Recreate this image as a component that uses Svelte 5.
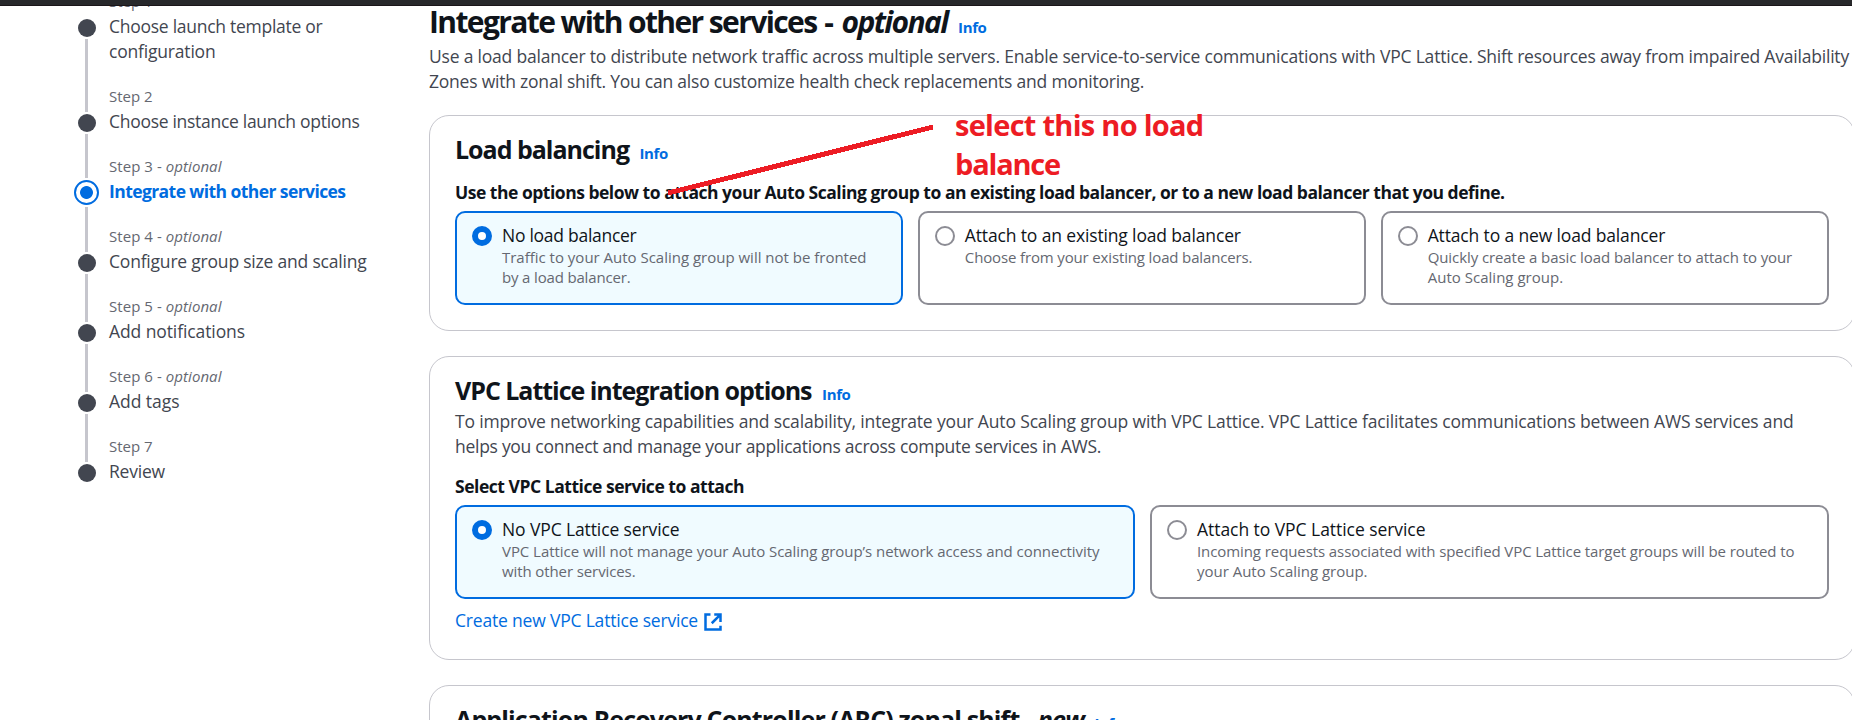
<script>
  const steps = [
    { n: 1, lines: [['Choose launch template or', 213.5], ['configuration', 106.5]] },
    { n: 2, lines: [['Choose instance launch options', 250.5]] },
    { n: 3, optional: true, active: true, lines: [['Integrate with other services', 236.5]] },
    { n: 4, optional: true, lines: [['Configure group size and scaling', 257.5]] },
    { n: 5, optional: true, lines: [['Add notifications', 136]] },
    { n: 6, optional: true, lines: [['Add tags', 70.5]] },
    { n: 7, lines: [['Review', 56]] },
  ];

  const balancers = [
    {
      title: ['No load balancer', 134.5],
      on: true,
      text: [['Traffic to your Auto Scaling group will not be fronted', 364.5], ['by a load balancer.', 128.5]],
    },
    {
      title: ['Attach to an existing load balancer', 276],
      text: [['Choose from your existing load balancers.', 287.5]],
    },
    {
      title: ['Attach to a new load balancer', 237.5],
      text: [['Quickly create a basic load balancer to attach to your', 364.5], ['Auto Scaling group.', 135.5]],
    },
  ];

  const lattice = [
    {
      title: ['No VPC Lattice service', 177.5],
      on: true,
      text: [
        ['VPC Lattice will not manage your Auto Scaling group’s network access and connectivity', 597.5],
        ['with other services.', 133.5],
      ],
    },
    {
      title: ['Attach to VPC Lattice service', 228.5],
      text: [
        ['Incoming requests associated with specified VPC Lattice target groups will be routed to', 597.5],
        ['your Auto Scaling group.', 170.5],
      ],
    },
  ];

  // Tracks a line of text so that it fills the given measure.
  function fit(node, width) {
    const spacing = (width - node.getBoundingClientRect().width) / node.textContent.length;
    node.style.letterSpacing = `${spacing.toFixed(3)}px`;
  }
</script>

{#snippet line(item)}
  <span class="line"><span class="fit" use:fit={item[1]}>{item[0]}</span></span>
{/snippet}

{#snippet tiles(items)}
  <div class="tiles" class:two={items.length === 2}>
    {#each items as t}
      <label class="tile" class:on={t.on}>
        <span class="radio"></span>
        <span class="tile-body">
          <span class="tile-title">{@render line(t.title)}</span>
          <span class="tile-text">{#each t.text as l}{@render line(l)}{/each}</span>
        </span>
      </label>
    {/each}
  </div>
{/snippet}

{#snippet info()}
  <a class="info" href="#info"><span class="fit" use:fit={28.5}>Info</span></a>
{/snippet}

<div class="page">
  <div class="topbar"></div>
  <div class="layout">
    <nav>
      <ol>
        {#each steps as s}
          <li class:active={s.active}>
            <div class="track">
              <i class="seg top"></i>
              <i class="dot"></i>
              <i class="seg rest"></i>
            </div>
            <div class="step">
              <div class="caption">
                {#if s.optional}
                  <span class="fit" use:fit={112.5}>Step {s.n} - <em>optional</em></span>
                {:else}
                  <span class="fit" use:fit={43.5}>Step {s.n}</span>
                {/if}
              </div>
              <div class="name">{#each s.lines as l}{@render line(l)}{/each}</div>
            </div>
          </li>
        {/each}
      </ol>
    </nav>

    <main>
      <h1>
        <span class="fit" use:fit={387.5}>Integrate with other services</span>
        <span class="dash">-</span>
        <em class="fit" use:fit={106}>optional</em>
        {@render info()}
      </h1>
      <p class="lead">
        {@render line(['Use a load balancer to distribute network traffic across multiple servers. Enable service-to-service communications with VPC Lattice. Shift resources away from impaired Availability', 1420])}
        {@render line(['Zones with zonal shift. You can also customize health check replacements and monitoring.', 715])}
      </p>

      <section class="card">
        <h2><span class="fit" use:fit={174}>Load balancing</span>{@render info()}</h2>
        <div class="label spaced">
          {@render line(['Use the options below to attach your Auto Scaling group to an existing load balancer, or to a new load balancer that you define.', 1049.5])}
        </div>
        {@render tiles(balancers)}
      </section>

      <section class="card">
        <h2><span class="fit" use:fit={356.5}>VPC Lattice integration options</span>{@render info()}</h2>
        <p class="desc">
          {@render line(['To improve networking capabilities and scalability, integrate your Auto Scaling group with VPC Lattice. VPC Lattice facilitates communications between AWS services and', 1338.5])}
          {@render line(['helps you connect and manage your applications across compute services in AWS.', 646])}
        </p>
        <div class="label spaced">{@render line(['Select VPC Lattice service to attach', 289])}</div>
        {@render tiles(lattice)}
        <a class="create" href="#create">
          <span class="fit" use:fit={243}>Create new VPC Lattice service</span>
          <svg width="20" height="20" viewBox="0 0 16 16" fill="none" stroke="currentColor" stroke-width="2">
            <path d="M14 8V2H9M7 9l6.5-6.5" />
            <path d="M6 2H2v12h12v-3" />
          </svg>
        </a>
      </section>

      <section class="card">
        <h2><span class="fit" use:fit={629}>Application Recovery Controller (ARC) zonal shift - <em>new</em></span>{@render info()}</h2>
        <p class="desc"></p>
      </section>
    </main>
  </div>

  <svg class="pointer" width="272" height="76" viewBox="0 0 272 76" shape-rendering="crispEdges">
    <path d="M5 70L270 4" stroke="#ed1c24" stroke-width="5" fill="none" />
  </svg>
  <div class="note">
    {@render line(['select this no load', 248.5])}
    {@render line(['balance', 105])}
  </div>
</div>

<style>
  :global(body) {
    margin: 0;
    background: #fff;
  }
  .page {
    position: relative;
    width: 1852px;
    height: 720px;
    overflow: hidden;
    background: #fff;
    color: #0f141a;
    font-family: 'Open Sans', 'Noto Sans', sans-serif;
    font-stretch: 92%;
    font-weight: 440;
    font-size: 17.5px;
    line-height: 25px;
  }
  .topbar {
    position: relative;
    z-index: 1;
    height: 5px;
    background: #27282b;
    border-bottom: 1px solid #1a1519;
  }
  .layout {
    display: grid;
    grid-template-columns: 429px 1425.5px;
    margin-top: -6px;
  }
  .line {
    display: block;
    white-space: nowrap;
  }
  .fit {
    display: inline-block;
    white-space: pre;
  }
  nav {
    padding-left: 74px;
    margin-top: -9px;
  }
  ol {
    list-style: none;
    margin: 0;
    padding: 0;
  }
  li {
    display: grid;
    grid-template-columns: 25px 1fr;
    column-gap: 10px;
    min-height: 70px;
    color: #424650;
  }
  li:first-child {
    min-height: 95px;
  }
  .track {
    display: flex;
    flex-direction: column;
    align-items: center;
    gap: 2px;
  }
  .seg {
    width: 3px;
    background: #c6c6cd;
  }
  .top {
    height: 26px;
  }
  .rest {
    flex: 1;
  }
  .dot {
    box-sizing: border-box;
    width: 18px;
    height: 18px;
    border-radius: 50%;
    background: #424650;
  }
  li:first-child .top,
  li:last-child .rest {
    background: none;
  }
  .active .top {
    height: 22px;
  }
  .active .dot {
    width: 25px;
    height: 25px;
    border: 2px solid #006ce0;
    background: radial-gradient(circle, #006ce0 6px, #fff 6.8px);
  }
  .caption {
    height: 22.5px;
    line-height: 20px;
    font-size: 15px;
    color: #656871;
  }
  .active .name {
    color: #006ce0;
    font-weight: 700;
  }
  h1,
  h2,
  p {
    margin: 0;
  }
  h1 {
    padding-top: 3px;
    font-size: 30px;
    line-height: 37px;
    white-space: nowrap;
    display: flex;
    align-items: baseline;
  }
  .dash {
    width: 11px;
    margin: 0 7px 0 7px;
    text-align: center;
  }
  h2 {
    font-size: 25px;
    line-height: 30px;
    display: flex;
    align-items: baseline;
    white-space: nowrap;
  }
  .info {
    margin-left: 10.5px;
    font-size: 15px;
    line-height: 20px;
    font-weight: 700;
    color: #006ce0;
    text-decoration: none;
  }
  .lead,
  .desc {
    color: #424650;
  }
  .lead {
    margin: 4px 0 21px;
  }
  .desc {
    margin-top: 4px;
  }
  .card {
    box-sizing: border-box;
    border: 1px solid #c6c6cd;
    border-radius: 20px;
    padding: 18px 25px 25px;
    margin-bottom: 25px;
  }
  .label {
    font-weight: 700;
  }
  h2 + .spaced {
    margin-top: 16px;
  }
  .spaced {
    margin: 15px 0 6px;
  }
  .tiles {
    display: grid;
    grid-template-columns: repeat(3, 1fr);
    gap: 15px;
  }
  .two {
    grid-template-columns: 680px 1fr;
  }
  .tile {
    box-sizing: border-box;
    height: 94px;
    display: flex;
    gap: 10px;
    padding: 9px 15px;
    border: 2px solid #8c8c94;
    border-radius: 10px;
  }
  .on {
    border-color: #006ce0;
    background: #f0fbff;
  }
  .radio {
    box-sizing: border-box;
    flex: none;
    width: 20px;
    height: 20px;
    margin-top: 4px;
    border: 2px solid #8c8c94;
    border-radius: 50%;
    background: #fff;
  }
  .on .radio {
    border: 6px solid #006ce0;
  }
  .tile-title,
  .tile-text {
    display: block;
  }
  .tile-title {
    padding-top: 0.5px;
  }
  .tile-text {
    margin-top: -0.5px;
    font-size: 15px;
    line-height: 20px;
    color: #656871;
  }
  .create {
    display: flex;
    width: max-content;
    gap: 5px;
    margin: 9px 0 1px;
    color: #006ce0;
    text-decoration: none;
  }
  .create svg {
    margin-top: 4px;
  }
  .pointer {
    position: absolute;
    left: 663px;
    top: 123px;
  }
  .note {
    position: absolute;
    left: 955px;
    top: 106px;
    color: #ed1c24;
    font-size: 29px;
    font-weight: 700;
    line-height: 38.5px;
    font-stretch: 100%;
  }
</style>
